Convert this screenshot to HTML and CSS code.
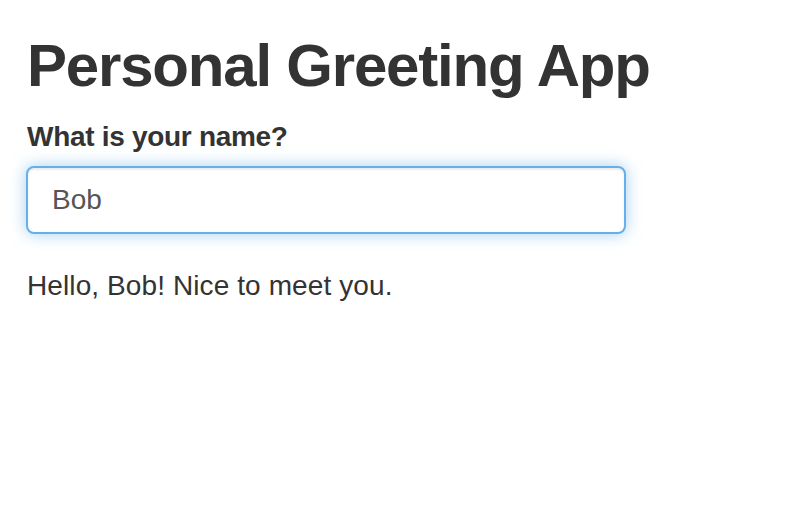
FILE: index.html
```html
<!DOCTYPE html>
<html lang="en">
<head>
<meta charset="utf-8">
<title>Personal Greeting App</title>
<link rel="stylesheet" href="styles.css">
</head>
<body>
<div class="container">
  <h2 class="title">Personal Greeting App</h2>
  <div class="form-group">
    <label class="label" for="name">What is your name?</label>
    <input class="input" id="name" type="text" value="Bob">
  </div>
  <div class="greeting">Hello, Bob! Nice to meet you.</div>
</div>
</body>
</html>
```

FILE: styles.css
```css
html, body {
  margin: 0;
  padding: 0;
  background: #fff;
}

body {
  font-family: "Liberation Sans", Arial, Helvetica, sans-serif;
  font-size: 28px;
  line-height: 40px;
  color: #333;
}

.container {
  padding: 0 27px;
}

.title {
  margin: 33px 0 18px;
  font-size: 60px;
  line-height: 66px;
  font-weight: 700;
  letter-spacing: -1.2px;
  color: #333;
}

.form-group {
  display: flex;
  flex-direction: column;
  align-items: flex-start;
  margin-bottom: 32px;
}

.label {
  font-weight: 700;
  font-size: 28px;
  letter-spacing: -0.3px;
  margin-bottom: 9px;
}

.input {
  box-sizing: border-box;
  width: 600px;
  height: 68px;
  margin-left: -1px;
  padding: 12px 24px;
  font-family: "Liberation Sans", Arial, Helvetica, sans-serif;
  font-size: 28px;
  line-height: 40px;
  color: #555;
  background: #fff;
  border: 2px solid #66afe9;
  border-radius: 8px;
  outline: none;
  box-shadow: inset 0 2px 2px rgba(0, 0, 0, 0.075), 0 0 16px rgba(102, 175, 233, 0.6);
}

.greeting {
  font-size: 28px;
  letter-spacing: 0.1px;
}
```
